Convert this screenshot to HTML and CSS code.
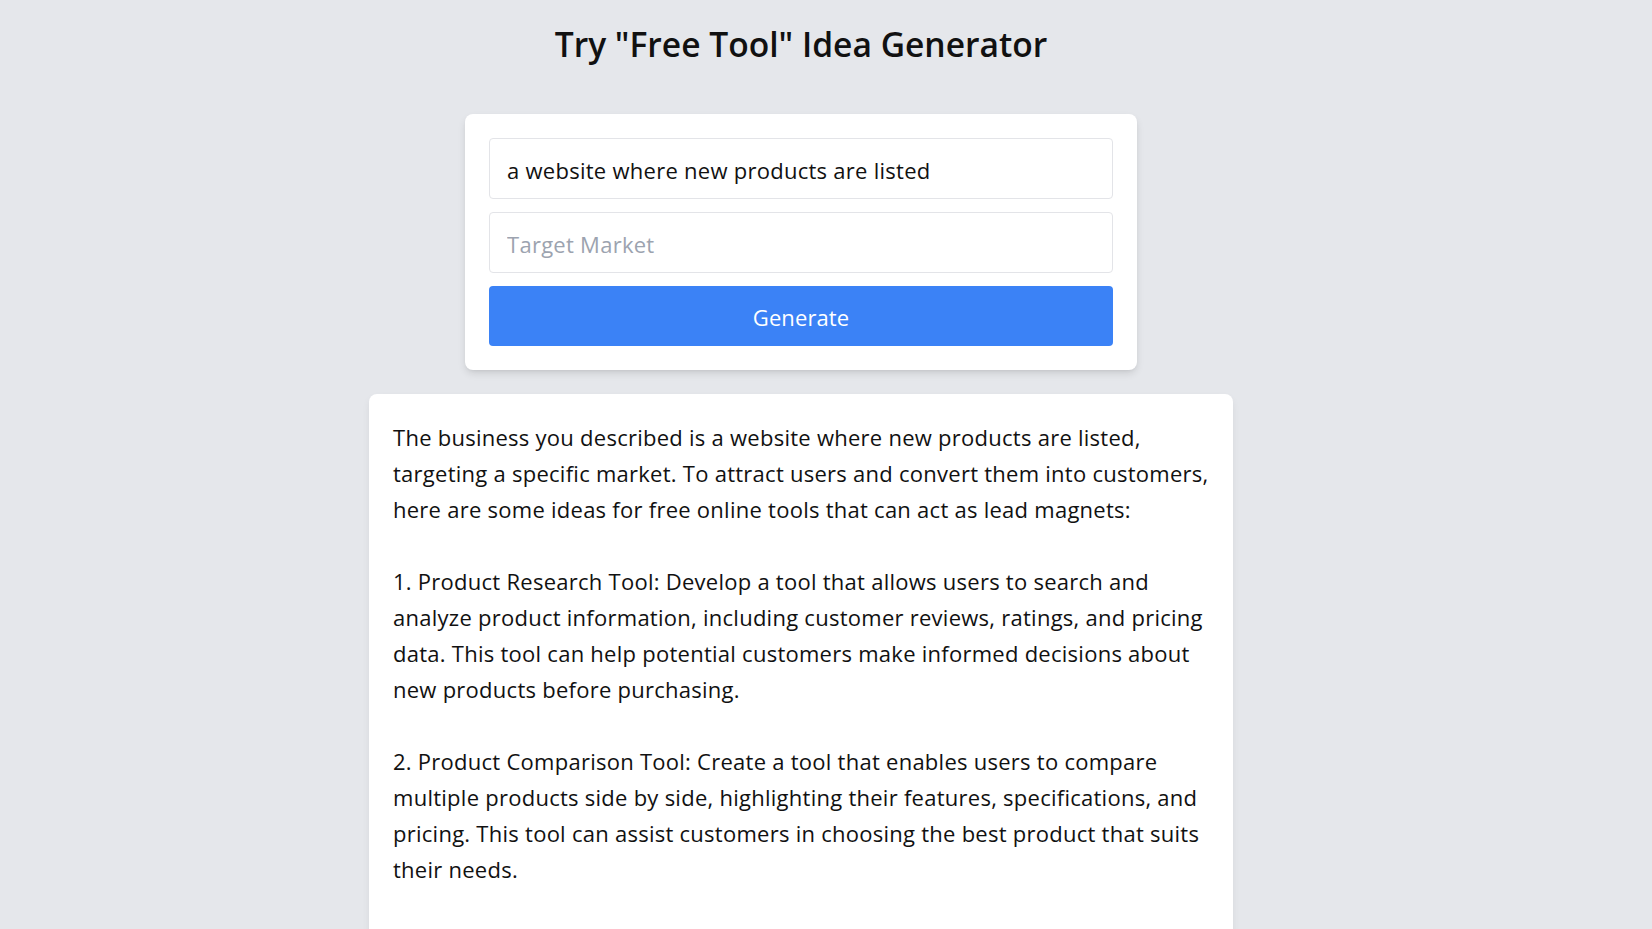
FILE: index.html
```html
<!DOCTYPE html>
<html lang="en">
<head>
<meta charset="utf-8">
<title>Try "Free Tool" Idea Generator</title>
<link rel="stylesheet" href="styles.css">
</head>
<body>
<main class="page">
  <h1 class="title">Try "Free Tool" Idea Generator</h1>
  <form class="form-card" onsubmit="return false">
    <input class="field" type="text" value="a website where new products are listed">
    <input class="field" type="text" placeholder="Target Market">
    <button class="btn" type="submit">Generate</button>
  </form>
  <section class="result-card">
    <p class="result"><span class="ln">The business you described is a website where new products are listed,</span><span class="ln">targeting a specific market. To attract users and convert them into customers,</span><span class="ln">here are some ideas for free online tools that can act as lead magnets:</span><span class="ln">&nbsp;</span><span class="ln">1. Product Research Tool: Develop a tool that allows users to search and</span><span class="ln">analyze product information, including customer reviews, ratings, and pricing</span><span class="ln">data. This tool can help potential customers make informed decisions about</span><span class="ln">new products before purchasing.</span><span class="ln">&nbsp;</span><span class="ln">2. Product Comparison Tool: Create a tool that enables users to compare</span><span class="ln">multiple products side by side, highlighting their features, specifications, and</span><span class="ln">pricing. This tool can assist customers in choosing the best product that suits</span><span class="ln">their needs.</span><span class="ln">&nbsp;</span></p>
  </section>
</main>
</body>
</html>
```
FILE: styles.css
```css
* { box-sizing: border-box; }
html, body { margin: 0; padding: 0; }
body {
  background: #e5e7eb;
  font-family: "Open Sans", Lato, sans-serif;
  color: #111111;
}
.page {
  width: 1602px;
  display: flex;
  flex-direction: column;
  align-items: center;
  padding-top: 22px;
}
.title {
  margin: 0;
  font-size: 33.6px;
  line-height: 44px;
  font-weight: 600;
  color: #111111;
}
.form-card {
  margin-top: 48px;
  width: 672px;
  background: #ffffff;
  border-radius: 8px;
  padding: 24px;
  display: flex;
  flex-direction: column;
  gap: 13px;
  box-shadow: 0 4px 8px -1px rgba(0,0,0,0.12), 0 2px 4px -2px rgba(0,0,0,0.08);
}
.field {
  height: 61px;
  width: 100%;
  border: 1px solid #e3e4e8;
  border-radius: 4px;
  padding: 3px 17px 0;
  font-family: "Open Sans", Lato, sans-serif;
  font-size: 22px;
  letter-spacing: 0.27px;
  color: #111111;
  background: #ffffff;
  outline: none;
}
.field::placeholder { color: #9ca3af; }
.btn {
  height: 60px;
  width: 100%;
  border: none;
  border-radius: 4px;
  padding: 2px 0 0;
  background: #3b82f6;
  color: #ffffff;
  font-family: "Open Sans", Lato, sans-serif;
  font-size: 22px;
  letter-spacing: 0.1px;
  cursor: pointer;
}
.result-card {
  margin-top: 24px;
  width: 864px;
  background: #ffffff;
  border-radius: 8px;
  padding: 25px 24px 23px;
  box-shadow: 0 4px 8px -1px rgba(0,0,0,0.08);
}
.result {
  margin: 0;
  font-size: 22px;
  letter-spacing: 0.26px;
  line-height: 36px;
}
.ln {
  display: block;
  white-space: nowrap;
}
```
